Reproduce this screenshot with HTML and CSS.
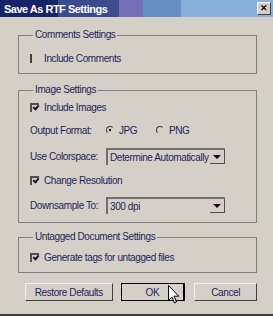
FILE: index.html
```html
<!DOCTYPE html>
<html lang="en">
<head>
<meta charset="UTF-8">
<meta name="viewport" content="width=device-width, initial-scale=1.0">
<title>Save As RTF Settings</title>
<link rel="stylesheet" href="styles.css">
</head>
<body>
<div class="window">
    <div class="titlebar">
        <span class="title">Save As RTF Settings</span>
        <span class="close">&#x2715;</span>
    </div>

    <div class="content">
        <div class="group group-comments">
            <div class="legend">Comments Settings</div>
            <div class="row row-first">
                <span class="check partial"></span>
                <span class="label">Include Comments</span>
            </div>
        </div>

        <div class="group group-images">
            <div class="legend">Image Settings</div>
            <div class="row row-images">
                <span class="check checked"></span>
                <span class="label">Include Images</span>
            </div>
            <div class="row row-format">
                <span class="field-label">Output Format:</span>
                <span class="radio selected"></span>
                <span class="label radio-label">JPG</span>
                <span class="radio"></span>
                <span class="label">PNG</span>
            </div>
            <div class="row row-colorspace">
                <span class="field-label">Use Colorspace:</span>
                <div class="select">
                    <span class="select-text">Determine Automatically</span>
                    <span class="select-btn"><span class="arrow"></span></span>
                </div>
            </div>
            <div class="row row-resolution">
                <span class="check checked"></span>
                <span class="label">Change Resolution</span>
            </div>
            <div class="row row-downsample">
                <span class="field-label">Downsample To:</span>
                <div class="select">
                    <span class="select-text">300 dpi</span>
                    <span class="select-btn"><span class="arrow"></span></span>
                </div>
            </div>
        </div>

        <div class="group group-untagged">
            <div class="legend">Untagged Document Settings</div>
            <div class="row row-first">
                <span class="check checked"></span>
                <span class="label">Generate tags for untagged files</span>
            </div>
        </div>

        <div class="buttons">
            <button class="btn btn-restore">Restore Defaults</button>
            <button class="btn btn-ok">OK</button>
            <button class="btn btn-cancel">Cancel</button>
        </div>
    </div>

    <!-- mouse pointer hovering the OK button -->
    <svg class="cursor" width="12" height="19" viewBox="0 0 12 19">
        <path d="M0.5 0.5 L0.5 15.5 L4 12 L6.5 18 L8.5 17 L6 11.2 L10.8 11.2 Z" fill="#fff" stroke="#000" stroke-width="1"/>
    </svg>
</div>
</body>
</html>
```

FILE: styles.css
```css
body {
    margin: 0;
    background: #d4d0c8;
    font-family: "Liberation Sans", Arial, sans-serif;
    font-size: 10px;
    letter-spacing: -0.4px;
    color: #1e1e5a;
}
.window {
    position: relative;
    width: 273px;
    height: 316px;
    box-sizing: border-box;
    border-bottom: 2px solid #404040;
    background: #d4d0c8;
    overflow: hidden;
}
.titlebar {
    height: 17px;
    display: flex;
    align-items: center;
    justify-content: space-between;
    padding: 0 2px 0 4px;
    background: linear-gradient(to right,
        #172468 0, #172468 58px,
        #3a4c8e 58px, #3a4c8e 119px,
        #7470b8 119px, #7470b8 143px,
        #6890c0 143px, #6890c0 181px,
        #8cb0dc 181px, #8cb0dc 100%);
}
.title {
    color: #fff;
    font-weight: bold;
    font-size: 11px;
    letter-spacing: -0.5px;
}
.close {
    width: 14px;
    height: 13px;
    box-sizing: border-box;
    background: #d4d0c8;
    border: 1px solid;
    border-color: #fff #404040 #404040 #fff;
    color: #1a0010;
    font-size: 9px;
    font-weight: bold;
    letter-spacing: 0;
    line-height: 11px;
    text-align: center;
}
.content {
    padding: 18px 16px 0 18px;
}
.group {
    border: 1px solid #808080;
    padding: 0 11px;
}
.legend {
    display: table;
    height: 12px;
    line-height: 12px;
    margin: -7px 0 0 3px;
    padding: 0 2px;
    background: #d4d0c8;
    white-space: nowrap;
}
.group-images {
    margin-top: 16px;
    padding-bottom: 8px;
}
.group-comments {
    padding-bottom: 6px;
}
.group-untagged {
    margin-top: 14px;
    padding-bottom: 6px;
}
.row {
    display: flex;
    align-items: center;
    height: 18px;
    white-space: nowrap;
}
.group-comments .row-first { margin-top: 8px; }
.group-untagged .row-first { margin-top: 5px; }
.row-images { margin-top: 2px; }
.row-format { margin-top: 5px; }
.row-colorspace { margin-top: 8px; }
.row-resolution { margin-top: 6px; }
.row-downsample { margin-top: 7px; }

.check {
    width: 9px;
    height: 9px;
    box-sizing: border-box;
    margin-right: 5px;
    position: relative;
    flex: none;
}
.check.partial {
    border-left: 2px solid #404040;
}
.check.checked {
    border-top: 2px solid #505050;
    border-left: 2px solid #505050;
}
.check.checked::after {
    content: "";
    position: absolute;
    left: 1px;
    top: 0;
    width: 4px;
    height: 2px;
    border-left: 2px solid #1a1040;
    border-bottom: 2px solid #1a1040;
    transform: rotate(-50deg);
}
.field-label {
    width: 76px;
    flex: none;
}
.radio {
    width: 8px;
    height: 8px;
    box-sizing: border-box;
    border-radius: 50%;
    border: 1px solid transparent;
    border-top-color: #404040;
    border-left-color: #404040;
    margin-right: 5px;
    position: relative;
    flex: none;
}
.radio.selected::after {
    content: "";
    position: absolute;
    left: 2px;
    top: 2px;
    width: 2px;
    height: 2px;
    background: #101010;
}
.radio-label {
    width: 37px;
}
.select {
    display: flex;
    align-items: center;
    justify-content: space-between;
    width: 119px;
    height: 17px;
    box-sizing: border-box;
    border-top: 2px solid #707070;
    border-left: 2px solid #707070;
    padding-left: 2px;
    flex: none;
}
.select-text {
    overflow: hidden;
}
.select-btn {
    width: 15px;
    height: 14px;
    box-sizing: border-box;
    border-right: 1px solid #505050;
    border-bottom: 1px solid #505050;
    display: flex;
    align-items: center;
    justify-content: center;
    flex: none;
}
.arrow {
    width: 0;
    height: 0;
    border-left: 4px solid transparent;
    border-right: 4px solid transparent;
    border-top: 4px solid #200010;
}
.buttons {
    display: flex;
    margin-top: 10px;
    padding-left: 7px;
}
.btn {
    height: 18px;
    box-sizing: border-box;
    background: #d4d0c8;
    font-family: "Liberation Sans", Arial, sans-serif;
    font-size: 10px;
    letter-spacing: -0.4px;
    color: #1e1e5a;
    border: 1px solid;
    border-color: #eeeeee #404040 #404040 #eeeeee;
    padding: 0;
}
.btn-restore {
    width: 88px;
}
.btn-ok {
    width: 65px;
    margin-left: 8px;
    border: 1px solid #000;
    border-right-width: 2px;
}
.btn-cancel {
    width: 63px;
    margin-left: 9px;
}
.cursor {
    position: absolute;
    left: 168px;
    top: 285px;
}
```
